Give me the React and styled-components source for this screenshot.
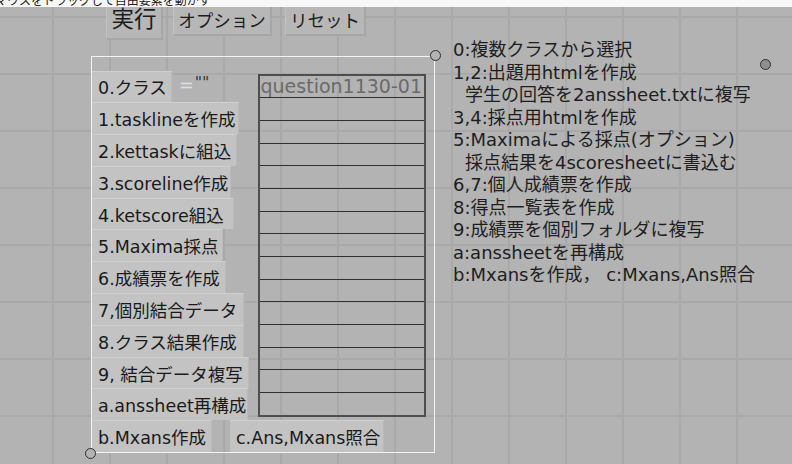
import React from "react";
import styled, { createGlobalStyle } from "styled-components";

const SANS = `"DejaVu Sans", "Noto Sans CJK JP", sans-serif`;
const JP = `"Noto Sans CJK JP", "DejaVu Sans", sans-serif`;

const GlobalStyle = createGlobalStyle`
  html, body {
    margin: 0;
    padding: 0;
    background: #b3b3b3;
    overflow: hidden;
  }
`;

export const Page = styled.div`
  width: 792px;
  height: 464px;
  display: flex;
  flex-direction: column;
`;

export const TopStrip = styled.div`
  height: 7px;
  flex-shrink: 0;
  background: #f8f8f8;
  overflow: hidden;
`;

export const Hint = styled.div`
  margin: -6px 0 0 -5px;
  font-family: ${JP};
  font-size: 12px;
  line-height: 12px;
  color: #222;
  white-space: nowrap;
`;

export const Stage = styled.div`
  position: relative;
  flex: 1;
  overflow: hidden;
  background-color: #b3b3b3;
  background-image: linear-gradient(to right, #a9a9a9 2px, transparent 2px),
    linear-gradient(to bottom, #a9a9a9 2px, transparent 2px);
  background-size: 57px 57px;
  background-position: 52px 9px;
`;

export const Toolbar = styled.div`
  display: flex;
  align-items: flex-start;
  height: 32px;
  padding-left: 106px;
  gap: 10px;
`;

export const ToolButton = styled.div`
  box-sizing: border-box;
  width: ${(p) => p.$w}px;
  height: ${(p) => p.$h}px;
  margin-left: ${(p) => p.$ml || 0}px;
  background: #b7b7b7;
  border-left: 1px solid #c3c3c3;
  border-right: 2px solid #a6a6a6;
  border-bottom: 2px solid #a6a6a6;
  font-family: ${JP};
  font-size: ${(p) => p.$size}px;
  line-height: ${(p) => p.$lh}px;
  color: #1c1c1c;
  text-align: center;
  white-space: nowrap;
`;

export const Body = styled.div`
  display: flex;
  align-items: flex-start;
`;

export const Panel = styled.div`
  position: relative;
  box-sizing: border-box;
  width: 344px;
  height: 397px;
  margin: 17px 0 0 91px;
  padding-top: 13.5px;
  border: 1.5px solid #f3f3f3;
  display: flex;
  flex-direction: column;
`;

export const Upper = styled.div`
  display: flex;
  align-items: flex-start;
`;

export const ButtonColumn = styled.div`
  width: 165.5px;
  display: flex;
  flex-direction: column;
  align-items: flex-start;
`;

export const ClassRow = styled.div`
  display: flex;
  align-items: flex-start;
`;

export const StepButton = styled.div`
  box-sizing: border-box;
  width: ${(p) => p.$w}px;
  height: 31.8px;
  display: flex;
  align-items: center;
  padding-left: 6px;
  background: #c3c3c3;
  border-top: 1px solid #d0d0d0;
  border-right: 1px solid #bababa;
  font-family: ${SANS};
  font-size: 17.5px;
  color: #1a1a1a;
  white-space: nowrap;
`;

export const Eq = styled.span`
  margin: 4px 0 0 7px;
  font-family: ${SANS};
  font-size: 17.5px;
  color: #e0e0e0;
`;

export const Quote = styled.span`
  margin: 2px 0 0 1px;
  font-family: ${SANS};
  font-size: 16px;
  color: #3a3a3a;
`;

export const Table = styled.div`
  box-sizing: border-box;
  width: 168px;
  height: 343px;
  margin-top: 3px;
  border: 2px solid #4e4e4e;
  display: flex;
  flex-direction: column;
`;

export const TableRow = styled.div`
  flex: 1;
  box-sizing: border-box;
  border-bottom: 1.5px solid #303030;
  overflow: hidden;
  white-space: nowrap;
  font-family: ${SANS};
  font-size: 19px;
  line-height: 20px;
  color: #6a6a6a;
  padding-left: 1px;

  &:last-child {
    border-bottom: none;
  }
`;

export const BottomRow = styled.div`
  display: flex;
  gap: 18px;
`;

export const Handle = styled.div`
  position: absolute;
  box-sizing: border-box;
  width: 11px;
  height: 11px;
  border-radius: 50%;
  border: 1.5px solid #2e2e2e;
  background: ${(p) => p.$fill || "#b3b3b3"};
`;

export const Notes = styled.div`
  margin: 0 0 0 18px;
  font-family: ${SANS};
  font-size: 18px;
  line-height: 22.5px;
  color: #1e1e1e;
  white-space: nowrap;
`;

export const NoteLine = styled.div`
  padding-left: ${(p) => (p.$indent ? 12 : 0)}px;
`;

const steps = [
  { label: "1.tasklineを作成", w: 147 },
  { label: "2.kettaskに組込", w: 145 },
  { label: "3.scoreline作成", w: 139 },
  { label: "4.ketscore組込", w: 142 },
  { label: "5.Maxima採点", w: 131 },
  { label: "6.成績票を作成", w: 134 },
  { label: "7,個別結合データ", w: 152 },
  { label: "8.クラス結果作成", w: 152 },
  { label: "9, 結合データ複写", w: 157 },
  { label: "a.anssheet再構成", w: 156 },
];

const notes = [
  { text: "0:複数クラスから選択" },
  { text: "1,2:出題用htmlを作成" },
  { text: "学生の回答を2anssheet.txtに複写", indent: true },
  { text: "3,4:採点用htmlを作成" },
  { text: "5:Maximaによる採点(オプション)" },
  { text: "採点結果を4scoresheetに書込む", indent: true },
  { text: "6,7:個人成績票を作成" },
  { text: "8:得点一覧表を作成" },
  { text: "9:成績票を個別フォルダに複写" },
  { text: "a:anssheetを再構成" },
  { text: "b:Mxansを作成， c:Mxans,Ans照合" },
];

const rows = Array.from({ length: 15 }, (_, i) => (i === 0 ? "question1130-01" : ""));

export default function App() {
  return (
    <Page>
      <GlobalStyle />
      <TopStrip>
        <Hint>マウスをドラッグして自由要素を動かす</Hint>
      </TopStrip>
      <Stage>
        <Toolbar>
          <ToolButton $w={57} $h={33} $size={22.5} $lh={21}>
            実行
          </ToolButton>
          <ToolButton $w={99} $h={29} $size={17.5} $lh={25}>
            オプション
          </ToolButton>
          <ToolButton $w={81} $h={29} $size={17.5} $lh={25} $ml={3}>
            リセット
          </ToolButton>
        </Toolbar>
        <Body>
          <Panel>
            <Upper>
              <ButtonColumn>
                <ClassRow>
                  <StepButton $w={80}>0.クラス</StepButton>
                  <Eq>=</Eq>
                  <Quote>""</Quote>
                </ClassRow>
                {steps.map((s) => (
                  <StepButton key={s.label} $w={s.w}>
                    {s.label}
                  </StepButton>
                ))}
              </ButtonColumn>
              <Table>
                {rows.map((r, i) => (
                  <TableRow key={i}>{r}</TableRow>
                ))}
              </Table>
            </Upper>
            <BottomRow>
              <StepButton $w={120}>b.Mxans作成</StepButton>
              <StepButton $w={154}>c.Ans,Mxans照合</StepButton>
            </BottomRow>
            <Handle style={{ top: -7, right: -7 }} />
            <Handle style={{ bottom: -7, left: -7 }} />
          </Panel>
          <Notes>
            {notes.map((n) => (
              <NoteLine key={n.text} $indent={n.indent}>
                {n.text}
              </NoteLine>
            ))}
          </Notes>
        </Body>
        <Handle $fill="#8f8f8f" style={{ top: 51.8, left: 759.8 }} />
      </Stage>
    </Page>
  );
}
